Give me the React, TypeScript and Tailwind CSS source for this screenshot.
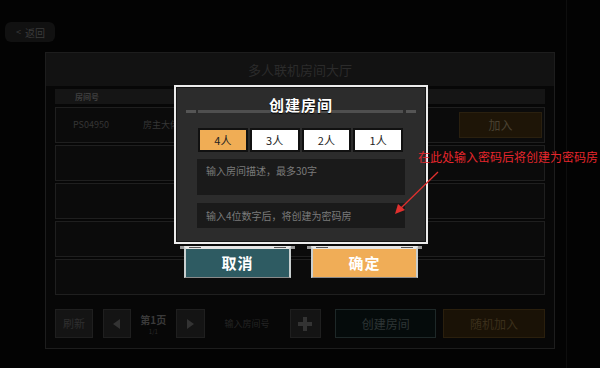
import React from "react";

const font = { fontFamily: '"Noto Sans CJK SC", "Noto Sans", sans-serif' };

function Row({ children }: { children?: React.ReactNode }) {
  return (
    <div className="h-[36px] border border-[#1f1f1f] bg-[#0b0b0b] flex items-center">{children}</div>
  );
}

function DlgButton({ label, fill }: { label: string; fill: string }) {
  return (
    <div className={`relative w-[107px] h-[32px] ${fill} border-x-2 border-t-[3px] border-b border-x-[#c9cfcf] border-t-[#e4e4e4] border-b-[#8a8a8a] flex items-center justify-center`}>
      <div className="absolute -top-[3px] -left-[6px] w-[4px] h-[3px] bg-[#9a9a9a]" />
      <div className="absolute -top-[3px] -right-[6px] w-[4px] h-[3px] bg-[#9a9a9a]" />
      <div className="absolute -top-[2px] left-[3px] w-[12px] h-[1px] bg-[#555]" />
      <div className="absolute -top-[2px] right-[3px] w-[12px] h-[1px] bg-[#555]" />
      <span className="text-white text-[15px] font-bold tracking-[1px]">{label}</span>
    </div>
  );
}

export default function App() {
  return (
    <div className="relative w-[600px] h-[368px] bg-[#030303] overflow-hidden" style={font}>
      <div className="absolute top-0 bottom-0 left-[566px] w-[1px] bg-[#0e0e0e]" />
      <div className="flex flex-col pt-[22px]">
        <div className="ml-[5px] w-[50px] h-[20px] rounded-md bg-[#111] flex items-center gap-[4px] pl-[11px] text-[#3b3b3b] text-[10px]">
          <span className="text-[9px]">&lt;</span>
          <span>返回</span>
        </div>
        <div className="mt-[10px] ml-[45px] w-[510px] border border-[#1d1d1d] bg-[#070707] flex flex-col">
          <div className="h-[33px] bg-[#121212] flex items-center justify-center text-[#2b2b2b] text-[13px]">
            多人联机房间大厅
          </div>
          <div className="px-[9px] pt-[3px] pb-[10px] flex flex-col">
            <div className="h-[15px] bg-[#151515] flex items-center pl-[20px] text-[8px] text-[#3e3e3e] font-bold">
              房间号
            </div>
            <div className="mt-[3px] flex flex-col gap-[2px]">
              <Row>
                <span className="ml-[17px] text-[9px] text-[#363636]">PS04950</span>
                <span className="ml-[34px] text-[9px] text-[#363636]">房主大佬的房间</span>
                <div className="ml-auto mr-[2px] w-[83px] h-[26px] bg-[#1e1507] border border-[#2a200f] flex items-center justify-center text-[#4a4232] text-[12px]">
                  加入
                </div>
              </Row>
              <Row />
              <Row />
              <Row />
              <Row />
            </div>
            <div className="mt-[14px] h-[29px] flex items-center">
              <div className="w-[38px] h-[29px] bg-[#141414] border border-[#1f1f1f] flex items-center justify-center text-[#2f2f2f] text-[11px]">
                刷新
              </div>
              <div className="ml-[10px] w-[28px] h-[29px] bg-[#141414] border border-[#1f1f1f] flex items-center justify-center">
                <svg width="8" height="10" viewBox="0 0 8 10"><polygon points="7,0 7,10 0,5" fill="#333" /></svg>
              </div>
              <div className="w-[45px] flex flex-col items-center">
                <div className="h-[15px] text-[#3a3a3a] text-[10px] font-bold leading-[15px]">第1页</div>
                <div className="h-[9px] text-[#2a2a2a] text-[6px] leading-[9px]">1/1</div>
              </div>
              <div className="w-[29px] h-[29px] bg-[#141414] border border-[#1f1f1f] flex items-center justify-center">
                <svg width="8" height="10" viewBox="0 0 8 10"><polygon points="1,0 1,10 8,5" fill="#333" /></svg>
              </div>
              <div className="w-[85px] flex items-center justify-center text-[#242424] text-[9px]">输入房间号</div>
              <div className="w-[32px] h-[29px] bg-[#141414] border border-[#1f1f1f] flex items-center justify-center">
                <svg width="14" height="14" viewBox="0 0 14 14"><rect x="5" y="0" width="4" height="14" fill="#333" /><rect x="0" y="5" width="14" height="4" fill="#333" /></svg>
              </div>
              <div className="ml-[14px] w-[101px] h-[29px] bg-[#050b0b] border border-[#1e2828] flex items-center justify-center text-[#2e3535] text-[12px]">
                创建房间
              </div>
              <div className="ml-[7px] w-[102px] h-[29px] bg-[#1a1206] border border-[#2a1f0d] flex items-center justify-center text-[#3b2f1b] text-[12px]">
                随机加入
              </div>
            </div>
          </div>
        </div>
      </div>

      {/* Modal */}
      <div className="absolute left-[174px] top-[85px] w-[254px] h-[159px] border-2 border-[#ececec] bg-[#2c2c2c] shadow-[inset_0_0_0_1px_#161616]">
        <div className="flex flex-col pt-[9px]">
          <div className="relative z-10 h-[17px] flex items-center justify-center text-white text-[15px] font-bold leading-none tracking-[1px] [text-shadow:0_1px_1px_#000]">
            创建房间
          </div>
          <div className="-mt-[3px] h-[3px] flex pl-[10px]">
            <div className="w-[10px] bg-[#555]" />
            <div className="ml-[2px] w-[205px] bg-[#4f4f4f]" />
            <div className="ml-[3px] w-[10px] bg-[#555]" />
          </div>
          <div className="mt-[15px] ml-[22px] w-[205px] h-[24px] flex gap-[2px]">
            <div className="flex-1 bg-[#f0ad55] border-2 border-[#111] flex items-center justify-center text-[#222] text-[11px]">4人</div>
            <div className="flex-1 bg-white border-2 border-[#111] flex items-center justify-center text-[#222] text-[11px]">3人</div>
            <div className="flex-1 bg-white border-2 border-[#111] flex items-center justify-center text-[#222] text-[11px]">2人</div>
            <div className="flex-1 bg-white border-2 border-[#111] flex items-center justify-center text-[#222] text-[11px]">1人</div>
          </div>
          <div className="mt-[7px] ml-[21px] w-[208px] h-[36px] bg-[#1a1a1a] pl-[9px] pt-[4px] text-[#7b7b7b] text-[10px]">
            输入房间描述，最多30字
          </div>
          <div className="mt-[8px] ml-[21px] w-[208px] h-[25px] bg-[#1a1a1a] pl-[9px] flex items-center text-[#7b7b7b] text-[10px]">
            输入4位数字后，将创建为密码房
          </div>
        </div>
      </div>

      {/* Dialog buttons */}
      <div className="absolute left-[184px] top-[246px] flex gap-[20px]">
        <DlgButton label="取消" fill="bg-[#2e5b62]" />
        <DlgButton label="确定" fill="bg-[#f0ad57]" />
      </div>

      {/* Annotation */}
      <div className="absolute left-[418px] top-[151px] text-[#e5262c] text-[12px] leading-none whitespace-nowrap">
        在此处输入密码后将创建为密码房
      </div>
      <svg className="absolute left-0 top-0" width="600" height="368" viewBox="0 0 600 368">
        <line x1="438" y1="172" x2="400" y2="209" stroke="#e0302e" strokeWidth="1.3" />
        <polygon points="395,214 398,204 405,210" fill="#e0302e" />
      </svg>
    </div>
  );
}
